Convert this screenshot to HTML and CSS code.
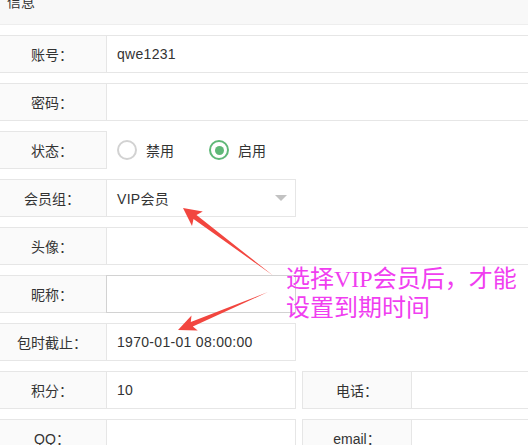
FILE: index.html
```html
<!DOCTYPE html>
<html lang="zh-CN">
<head>
<meta charset="utf-8">
<title>信息</title>
<link rel="stylesheet" href="styles.css">
</head>
<body>
<div class="card-header"><span class="title">信息</span></div>
<div class="form">
  <div class="row"><div class="label">账号：</div><div class="input block">qwe1231</div></div>
  <div class="row"><div class="label">密码：</div><div class="input block"></div></div>
  <div class="row">
    <div class="label">状态：</div>
    <div class="radios">
      <div class="radio"><span class="circle"></span><span>禁用</span></div>
      <div class="radio checked"><span class="circle"><span class="dot"></span></span><span>启用</span></div>
    </div>
  </div>
  <div class="row"><div class="label">会员组：</div><div class="input inline select"><span>VIP会员</span><i class="caret"></i></div></div>
  <div class="row"><div class="label">头像：</div><div class="input block"></div></div>
  <div class="row"><div class="label">昵称：</div><div class="input inline hover"></div></div>
  <div class="row"><div class="label">包时截止：</div><div class="input inline">1970-01-01 08:00:00</div></div>
  <div class="row"><div class="label">积分：</div><div class="input inline">10</div><div class="label second">电话：</div><div class="input block"></div></div>
  <div class="row"><div class="label">QQ：</div><div class="input inline"></div><div class="label second">email：</div><div class="input block"></div></div>
</div>
<div class="annotation">选择VIP会员后，才能<br>设置到期时间</div>
<svg class="arrows" width="528" height="445" viewBox="0 0 528 445">
  <polygon class="arrow" points="183,208 202.8,211.6 196.5,215 273,275.5 193.5,219 192,226"/>
  <polygon class="arrow" points="178,330 197.7,330.4 192.8,326.5 268,292 190.8,321.9 191.5,315.6"/>
</svg>
</body>
</html>
```
FILE: styles.css
```css
* { box-sizing: border-box; }
html, body { margin: 0; padding: 0; background: #fff; overflow: hidden; }
body {
  position: relative;
  width: 528px;
  height: 445px;
  font-family: "Liberation Sans", "Noto Sans CJK SC", sans-serif;
  font-size: 14px;
  color: #333;
}
.card-header {
  height: 25px;
  background: #f8f8f8;
  border-bottom: 1px solid #eeeeee;
  padding-left: 7px;
  overflow: hidden;
}
.title { display: block; margin-top: -10px; line-height: 24px; }
.form { margin: 10px 0 0 -3px; width: 600px; }
.row { display: flex; height: 38px; margin-bottom: 10px; }
.label {
  width: 110px;
  flex: none;
  background: #fafafa;
  border: 1px solid #e6e6e6;
  display: flex;
  align-items: center;
  justify-content: center;
}
.label.second { margin-left: 6px; width: 110px; }
.input {
  border: 1px solid #e6e6e6;
  margin-left: -1px;
  padding-left: 10px;
  display: flex;
  align-items: center;
  background: #fff;
  letter-spacing: 0.3px;
}
.block { flex: 1; }
.inline { width: 190px; flex: none; }
.hover { border-color: #d2d2d2; }
.caret {
  margin-left: auto;
  margin-right: 8px;
  width: 0;
  height: 0;
  border-left: 6px solid transparent;
  border-right: 6px solid transparent;
  border-top: 6px solid #c2c2c2;
}
.radios { display: flex; align-items: center; padding-left: 10px; }
.radio { display: flex; align-items: center; margin-right: 35px; }
.circle {
  width: 20px;
  height: 20px;
  border: 2px solid #d2d2d2;
  border-radius: 50%;
  margin-right: 9px;
  display: flex;
  align-items: center;
  justify-content: center;
}
.checked .circle { border-color: #5fb878; }
.dot { width: 9px; height: 9px; border-radius: 50%; background: #5fb878; }
.annotation {
  position: absolute;
  left: 286px;
  top: 265px;
  font-family: "Liberation Serif", "Noto Sans CJK SC", serif;
  font-size: 24px;
  line-height: 29px;
  color: #f03ef0;
  white-space: nowrap;
}
.arrows { position: absolute; left: 0; top: 0; pointer-events: none; }
.arrow { fill: #f2463f; }
```
